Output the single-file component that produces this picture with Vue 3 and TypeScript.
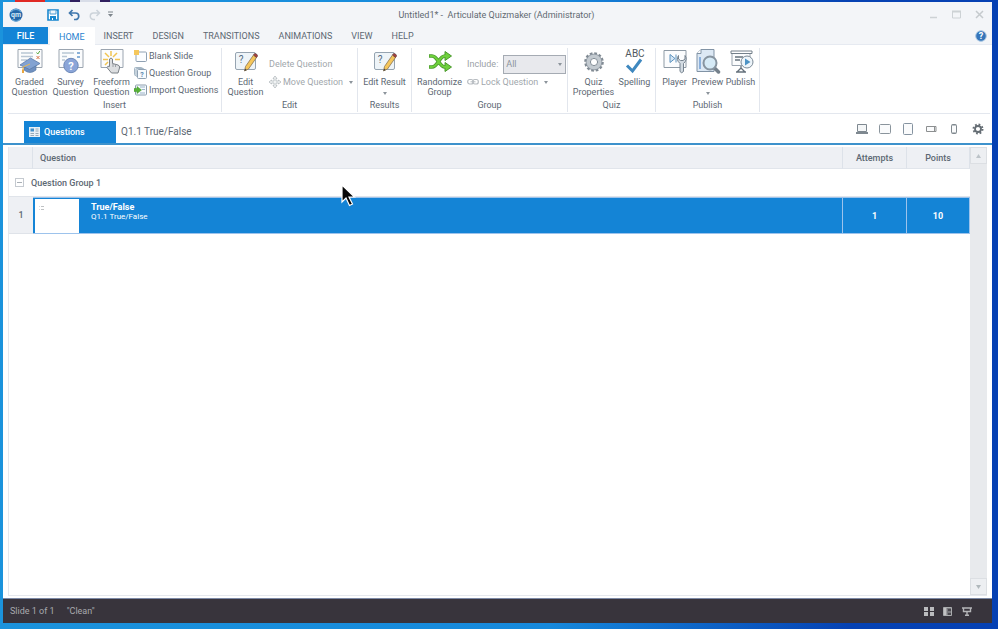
<script setup lang="ts">
import { ref } from 'vue'

const ribbonTabs = ['HOME', 'INSERT', 'DESIGN', 'TRANSITIONS', 'ANIMATIONS', 'VIEW', 'HELP']
const activeTab = ref('HOME')
const include = ref('All')

interface QuizRow {
  index: number
  title: string
  subtitle: string
  attempts: number
  points: number
}
const rows: QuizRow[] = [
  { index: 1, title: 'True/False', subtitle: 'Q1.1 True/False', attempts: 1, points: 10 },
]
</script>

<template>
  <div class="desktop">
    <div class="window">
      <header class="titlebar">
        <div class="quick">
          <svg class="logo" width="14" height="14" viewBox="0 0 14 14">
            <circle cx="7" cy="7" r="6.500" fill="#2467a9" />
            <path d="M2 4a6 6 0 0 1 10 0M3 11.500a6 6 0 0 0 8 0" fill="none" stroke="#69a9d8" stroke-width="1.200" />
            <text x="7" y="9.300" text-anchor="middle" font-size="7" font-weight="700" fill="#d8ebf9">qm</text>
          </svg>
          <button aria-label="Save">
            <svg width="12" height="12" viewBox="0 0 12 12">
              <path d="M1 1h10v10H1z" fill="#fff" stroke="#1787cf" stroke-width="1.600" />
              <path d="M3 1h6v4H3z" fill="#eef5fa" stroke="#4c9bd0" />
              <path d="M3 7h6v4H3z" fill="#1787cf" /><path d="M5 9h1v2H5z" fill="#fff" />
            </svg>
          </button>
          <button aria-label="Undo">
            <svg width="12" height="12" viewBox="0 0 12 12"><path d="M4.500 1L1.500 4l3 3M2 4h5.500a3 3 0 0 1 0 6.500H6" fill="none" stroke="#3f77ad" stroke-width="1.700" /></svg>
          </button>
          <button aria-label="Redo" disabled>
            <svg width="12" height="12" viewBox="0 0 12 12"><path d="M7.500 1l3 3-3 3M10 4H4.500a3 3 0 0 0 0 6.500H6" fill="none" stroke="#ccd3da" stroke-width="1.500" /></svg>
          </button>
          <button class="customize" aria-label="Customize toolbar">
            <svg width="7" height="7" viewBox="0 0 7 7"><path d="M1 1h5" stroke="#7d858c" /><path d="M1 3h5L3.500 6z" fill="#7d858c" /></svg>
          </button>
        </div>
        <div class="title">Untitled1* -&nbsp; Articulate Quizmaker (Administrator)</div>
        <div class="controls">
          <button aria-label="Minimize"><svg width="9" height="9" viewBox="0 0 9 9"><path d="M1 7.500h7" stroke="#cdd2d5" stroke-width="1.500" /></svg></button>
          <button aria-label="Maximize"><svg width="9" height="9" viewBox="0 0 9 9"><path d="M.5 1.500h8v6.500h-8z" fill="none" stroke="#cdd2d5" /><path d="M0 1.500h9" stroke="#cdd2d5" stroke-width="2" /></svg></button>
          <button aria-label="Close"><svg width="9" height="9" viewBox="0 0 9 9"><path d="M1 1l7 7M8 1L1 8" stroke="#c5cacd" stroke-width="1.500" /></svg></button>
        </div>
      </header>

      <nav class="menu">
        <button class="file">FILE</button>
        <button
          v-for="t in ribbonTabs"
          :key="t"
          :class="['tab', { active: t === activeTab }]"
          @click="activeTab = t"
        >{{ t }}</button>
        <button class="help" aria-label="Help">
          <svg width="12" height="12" viewBox="0 0 12 12">
            <circle cx="6" cy="6" r="5.300" fill="#3576bb" stroke="#a9c6e2" />
            <text x="6" y="9" text-anchor="middle" font-size="9" font-weight="700" fill="#fff">?</text>
          </svg>
        </button>
      </nav>

      <section class="ribbon">
        <div class="group insert">
          <div class="tools">
            <button class="big">
              <svg width="26" height="26" viewBox="0 0 26 26">
                <path d="M1 1.500h24v18H1z" fill="#fbfcfd" stroke="#9ba5b0" />
                <path d="M4 5h12M4 8.500h12M4 12h6" stroke="#b8c6d4" stroke-width="1.500" />
                <path d="M19.500 4.500l1.300 1.500 2-3" fill="none" stroke="#58a942" /><path d="M19.500 8l3 3M22.500 8l-3 3" stroke="#d8744a" />
                <path d="M7 16.500v5.500q6 5 12 0v-5.500z" fill="#6f90c0" stroke="#5b7ca6" stroke-width=".7" />
                <path d="M3 17L13.500 10 23 15.500 12.500 21.500z" fill="#82a2d2" stroke="#5b7aa8" stroke-width=".8" />
                <path d="M13 16l-7 3v4" fill="none" stroke="#e8b854" /><path d="M5 21.500h2V25H5z" fill="#e8a742" />
              </svg>
              <span>Graded<br>Question</span>
            </button>
            <button class="big">
              <svg width="26" height="26" viewBox="0 0 26 26">
                <path d="M1 1.500h24v18H1z" fill="#fbfcfd" stroke="#9ba5b0" />
                <path d="M4 5h12M4 8.500h5M4 12h3" stroke="#b8c6d4" stroke-width="1.500" /><path d="M19 5h3M19 9h3" stroke="#8ab1d8" stroke-width="2" />
                <circle cx="13" cy="17.500" r="7.200" fill="#8ba5d8" stroke="#6b88b8" />
                <text x="13" y="21.500" text-anchor="middle" font-size="11" font-weight="700" fill="#fff">?</text>
              </svg>
              <span>Survey<br>Question</span>
            </button>
            <button class="big">
              <svg width="26" height="26" viewBox="0 0 26 26">
                <path d="M2 1.500h22v18H2z" fill="#fbfcfd" stroke="#9ba5b0" />
                <path d="M12 3v5M6 5l4 4M18 5l-4 4M4 11.500h5M16 11.500h5M6 17l3-3" stroke="#f1c452" stroke-width="1.500" />
                <path d="M10.500 11q1.500-2 3 0v4.500l5.500 1.500q2 .5 1.500 3l-1.500 5H12.500l-4.500-5.500q.5-2 2.500-1z" fill="#dcdee0" stroke="#7b8187" />
                <path d="M14 16v3M16.500 17v2" stroke="#8a9096" stroke-width=".8" />
              </svg>
              <span>Freeform<br>Question</span>
            </button>
            <div class="small-col three">
              <button class="small">
                <svg width="13" height="12" viewBox="0 0 13 12"><rect x="2" y="2" width="10.500" height="9.500" rx="1" fill="#fbfdff" stroke="#8fa1b3" /><path d="M0 0h5v5H0z" fill="#f5c75c" /></svg>
                <span>Blank Slide</span>
              </button>
              <button class="small">
                <svg width="13" height="12" viewBox="0 0 13 12">
                  <rect x=".5" y=".5" width="8" height="8" rx="1" fill="#e4edf3" stroke="#a5b6c4" /><rect x="2" y="1.500" width="8" height="8" rx="1" fill="#e4edf3" stroke="#a5b6c4" />
                  <rect x="3.500" y="2.500" width="9" height="9" rx="1" fill="#f7fbfe" stroke="#8fa1b3" /><text x="8" y="10" text-anchor="middle" font-size="7" font-weight="700" fill="#5685ad">?</text>
                </svg>
                <span>Question Group</span>
              </button>
              <button class="small">
                <svg width="13" height="12" viewBox="0 0 13 12"><rect x="1.500" y="1" width="11" height="10" rx="1" fill="#f7fbfe" stroke="#8c9dad" /><path d="M6 3h5M8 5.500h3M6 9h5" stroke="#9ab3c8" /><path d="M0 4.500h3V2.500L7.500 6 3 9.500V7.500H0z" fill="#56b236" stroke="#42952a" stroke-width=".5" /></svg>
                <span>Import Questions</span>
              </button>
            </div>
          </div>
          <div class="label">Insert</div>
        </div>

        <div class="group edit">
          <div class="tools">
            <button class="big wide">
              <svg width="26" height="26" viewBox="0 0 26 26">
                <rect x="2.500" y="4.500" width="20" height="17" rx="1.500" fill="#eef4f8" stroke="#96a4b1" />
                <text x="8" y="14.500" text-anchor="middle" font-size="10" fill="#546c82">?</text>
                <path d="M11.500 23l1-4.500L20.500 7l3 2.500L15.500 21z" fill="#f5c65b" stroke="#8a7350" stroke-width=".8" />
                <path d="M20.500 7l1.200-1.600q2.800.4 3 2.600L23.500 9.500z" fill="#a83f3c" stroke="#5b3b3b" stroke-width=".6" /><path d="M11.500 23l.6-2.600 1.700 1.500z" fill="#444" />
              </svg>
              <span>Edit<br>Question</span>
            </button>
            <div class="small-col two">
              <button class="small" disabled><span>Delete Question</span></button>
              <button class="small" disabled>
                <svg width="12" height="12" viewBox="0 0 12 12"><path d="M6 0l2 2.500H7V5h2.500V4L12 6 9.500 8V7H7v2.500h1L6 12 4 9.500h1V7H2.500v1L0 6l2.500-2v1H5V2.500H4z" fill="#f1f3f4" stroke="#b5bbbf" stroke-width=".8" /></svg>
                <span>Move Question</span><i class="caret"></i>
              </button>
            </div>
          </div>
          <div class="label">Edit</div>
        </div>

        <div class="group results">
          <div class="tools">
            <button class="big wide">
              <svg width="26" height="26" viewBox="0 0 26 26">
                <rect x="2.500" y="4.500" width="20" height="17" rx="1.500" fill="#eef4f8" stroke="#96a4b1" />
                <text x="8" y="14.500" text-anchor="middle" font-size="10" fill="#546c82">?</text>
                <path d="M11.500 23l1-4.500L20.500 7l3 2.500L15.500 21z" fill="#f5c65b" stroke="#8a7350" stroke-width=".8" />
                <path d="M20.500 7l1.200-1.600q2.800.4 3 2.600L23.500 9.500z" fill="#a83f3c" stroke="#5b3b3b" stroke-width=".6" /><path d="M11.500 23l.6-2.600 1.700 1.500z" fill="#444" />
              </svg>
              <span>Edit Result</span><i class="caret"></i>
            </button>
          </div>
          <div class="label">Results</div>
        </div>

        <div class="group randomize">
          <div class="tools">
            <button class="big wide">
              <svg width="26" height="26" viewBox="0 0 26 26">
                <path d="M2 8h3c6 0 7 11 13 11h1M2 19h3c6 0 7-11 13-11h1" fill="none" stroke="#4a9a2c" stroke-width="3.600" />
                <path d="M18 3.500L24.500 8 18 12.500zM18 14.500l6.500 4.500-6.500 4.500z" fill="#6fd03c" stroke="#4a9a2c" />
                <path d="M2.600 8H5c6 0 7 11 13 11h2M2.600 19H5c6 0 7-11 13-11h2" fill="none" stroke="#6fd03c" stroke-width="2" />
              </svg>
              <span>Randomize<br>Group</span>
            </button>
            <div class="small-col two">
              <div class="include">
                <label for="include">Include:</label>
                <div class="select-box">
                  <select id="include" v-model="include" disabled><option>All</option></select>
                  <i class="caret"></i>
                </div>
              </div>
              <button class="small" disabled>
                <svg width="12" height="12" viewBox="0 0 12 12"><rect x=".7" y="3.500" width="5.500" height="4.500" rx="2" fill="none" stroke="#b7bcc1" stroke-width="1.200" /><rect x="5.800" y="3.500" width="5.500" height="4.500" rx="2" fill="none" stroke="#b7bcc1" stroke-width="1.200" /><path d="M3.500 5.800h5" stroke="#b7bcc1" /></svg>
                <span>Lock Question</span><i class="caret"></i>
              </button>
            </div>
          </div>
          <div class="label">Group</div>
        </div>

        <div class="group quiz">
          <div class="tools">
            <button class="big">
              <svg width="26" height="26" viewBox="0 0 26 26">
                <circle cx="13" cy="14" r="8.500" fill="none" stroke="#808a93" stroke-width="2.600" stroke-dasharray="2.670 1.780" />
                <circle cx="13" cy="14" r="5.800" fill="none" stroke="#c3cad0" stroke-width="4.200" /><circle cx="13" cy="14" r="7.900" fill="none" stroke="#87919a" stroke-width=".8" />
                <circle cx="13" cy="14" r="3.600" fill="#fff" stroke="#808b95" />
              </svg>
              <span>Quiz<br>Properties</span>
            </button>
            <button class="big">
              <svg width="26" height="26" viewBox="0 0 26 26">
                <text x="13" y="9" text-anchor="middle" font-size="10" fill="#4f5961">ABC</text>
                <path d="M5 17.500l5.500 5.500 8.500-11.500" fill="none" stroke="#3f88bf" stroke-width="3" />
              </svg>
              <span>Spelling</span>
            </button>
          </div>
          <div class="label">Quiz</div>
        </div>

        <div class="group publish">
          <div class="tools">
            <button class="big">
              <svg width="26" height="26" viewBox="0 0 26 26">
                <path d="M2 2.500h22v17H2z" fill="#fbfcfd" stroke="#8e9aa5" />
                <path d="M8 6.500v8l5-4zM14 6.500v8" fill="#d4e6f5" stroke="#5d93bf" />
                <path d="M16.500 7.500q-3 4 1.500 8v8q1.500 2.500 3.500 0v-8q4.500-4 1.500-8v3.500l-2 1.500h-2.500l-2-1.500z" fill="#d3dbe2" stroke="#76838f" />
              </svg>
              <span>Player</span>
            </button>
            <button class="big">
              <svg width="26" height="26" viewBox="0 0 26 26">
                <path d="M6 1.500h13v22H2V5.500z" fill="#dce8f4" stroke="#8193a5" /><path d="M6 1.500v4H2" fill="#fff" stroke="#8193a5" /><path d="M5 9v12" stroke="#8bb0dc" stroke-width="2" />
                <path d="M19.500 20l4 4" stroke="#75818c" stroke-width="3.500" stroke-linecap="round" /><circle cx="15" cy="15" r="6.500" fill="#d6eaf6" stroke="#8794a0" stroke-width="2" />
              </svg>
              <span>Preview</span><i class="caret"></i>
            </button>
            <button class="big">
              <svg width="26" height="26" viewBox="0 0 26 26">
                <path d="M4 5.500h18v12H4z" fill="#fbfcfd" stroke="#9ba5b0" /><path d="M3 3h21v2.500H3z" fill="#fff" stroke="#74808b" />
                <path d="M7 9h8M7 12h5M13 18v3M13 20l-4 4M13 20l4 4M8 24h10" fill="none" stroke="#65717c" stroke-width="1.300" />
                <circle cx="19" cy="14" r="6" fill="#eef5fa" stroke="#7c8a97" /><path d="M17 10.500v7l5.500-3.500z" fill="#4d93c5" />
              </svg>
              <span>Publish</span>
            </button>
          </div>
          <div class="label">Publish</div>
        </div>
      </section>

      <div class="docbar">
        <button class="doc active">
          <svg width="11" height="10" viewBox="0 0 11 10"><path d="M0 0h11v10H0z" fill="#e8f0f6" /><path d="M1.500 1.500H5v3H1.500z" fill="#3f8fcb" /><path d="M6.500 2h3M6.500 4h3M1.500 6.500H5M1.500 8.500H5M6.500 6.500h3M6.500 8.500h3" stroke="#8198aa" stroke-width=".8" /></svg>
          <span>Questions</span>
        </button>
        <button class="doc">Q1.1 True/False</button>
        <div class="devices">
          <button aria-label="Desktop"><svg width="14" height="14" viewBox="0 0 14 14"><path d="M2.500 2.500h9v7h-9z" fill="#f4f6f7" stroke="#7e8890" /><path d="M1 11h12" stroke="#7e8890" stroke-width="2" /></svg></button>
          <button aria-label="Tablet landscape"><svg width="14" height="14" viewBox="0 0 14 14"><rect x="1.500" y="2.500" width="11" height="9" rx="1" fill="#fafbfc" stroke="#8a949c" /></svg></button>
          <button aria-label="Tablet portrait"><svg width="14" height="14" viewBox="0 0 14 14"><rect x="2.500" y="1.500" width="9" height="11" rx="1" fill="#fafbfc" stroke="#8593a0" /></svg></button>
          <button aria-label="Phone landscape"><svg width="14" height="14" viewBox="0 0 14 14"><path d="M2.500 4.500h9.500v5H2.500zM10.500 4.500v5" fill="#fafbfc" stroke="#8c8f90" /></svg></button>
          <button aria-label="Phone portrait"><svg width="14" height="14" viewBox="0 0 14 14"><rect x="4.500" y="2.500" width="5" height="9" rx="1" fill="#fafbfc" stroke="#80898f" /><path d="M5 3h4M5 11h4" stroke="#80898f" /></svg></button>
          <button aria-label="Settings"><svg width="14" height="14" viewBox="0 0 14 14"><circle cx="8" cy="7" r="3" fill="none" stroke="#656d74" stroke-width="1.800" /><circle cx="8" cy="7" r="4.500" fill="none" stroke="#656d74" stroke-width="2" stroke-dasharray="1.730 1.804" /></svg></button>
        </div>
      </div>

      <main class="workspace">
        <div class="list">
          <table>
            <colgroup><col class="c-num"><col><col class="c-att"><col class="c-pts"></colgroup>
            <thead>
              <tr><th></th><th class="left">Question</th><th>Attempts</th><th>Points</th></tr>
            </thead>
            <tbody>
              <tr class="group-row">
                <td colspan="4">
                  <div class="group-head">
                    <button class="toggle" aria-label="Collapse group"></button>
                    <span>Question Group 1</span>
                  </div>
                </td>
              </tr>
              <tr v-for="r in rows" :key="r.index" class="question">
                <td class="num">{{ r.index }}</td>
                <td class="cell">
                  <div class="entry">
                    <div class="thumb"><svg width="8" height="8" viewBox="0 0 8 8"><path d="M3 2.500h3M3 5.500h3" stroke="#bfc2c4" /><path d="M1 2.500h1M1 5.500h1" stroke="#d8dadb" /></svg></div>
                    <div class="text"><b>{{ r.title }}</b><span>{{ r.subtitle }}</span></div>
                  </div>
                </td>
                <td class="cell value">{{ r.attempts }}</td>
                <td class="cell value">{{ r.points }}</td>
              </tr>
            </tbody>
          </table>
        </div>
        <div class="scroll">
          <button aria-label="Scroll up"><svg width="7" height="6" viewBox="0 0 7 6"><path d="M3.500 1L6 5H1z" fill="#bcc3c8" /></svg></button>
          <button aria-label="Scroll down"><svg width="7" height="6" viewBox="0 0 7 6"><path d="M3.500 5L6 1H1z" fill="#b0b8bc" /></svg></button>
        </div>
      </main>

      <footer class="status">
        <span>Slide 1 of 1</span>
        <span>"Clean"</span>
        <div class="views">
          <button aria-label="Grid view"><svg width="10" height="9" viewBox="0 0 10 9"><path d="M0 0h4v4H0zM6 0h4v4H6zM0 5h4v4H0zM6 5h4v4H6z" fill="#bbbcbf" /></svg></button>
          <button aria-label="Normal view"><svg width="10" height="9" viewBox="0 0 10 9"><path d="M.5 .5h8v8h-8z" fill="#77777c" stroke="#aaacae" /><path d="M1 1h2.500v7H1z" fill="#c2c2c4" /><path d="M5 2h3v2H5zM5 6h3v2H5z" fill="#49474e" /></svg></button>
          <button aria-label="Slide show"><svg width="10" height="9" viewBox="0 0 10 9"><path d="M0 1h10M1.500 1v3.500h7V1M2 4.500h6M5 5v3M3 8.300h4" fill="none" stroke="#b4b5b8" stroke-width="1.400" /></svg></button>
        </div>
      </footer>
    </div>

    <svg class="pointer" width="16" height="24" viewBox="0 0 16 24"><path d="M2 2v17l4-4 3.500 7.500 3-1.500L9 14h5.500z" fill="#080808" stroke="#fff" stroke-width="1.200" /></svg>
  </div>
</template>

<style>
body { margin: 0; }
</style>

<style scoped>
.desktop {
  position: relative;
  display: flex;
  box-sizing: border-box;
  min-height: 100vh;
  padding: 2px 6px 6px 3px;
  background:
    linear-gradient(#e02a25, #e02a25) 15px 0 / 30px 2px no-repeat,
    linear-gradient(90deg, #30205f 0 10px, #d8dde8 10px 30px, #30205f 30px) 70px 0 / 40px 2px no-repeat,
    linear-gradient(90deg, #1b93dc 0%, #1689dc 55%, #0642b3 85%, #0641b3 100%);
  font-family: Roboto, "Open Sans", sans-serif;
  font-size: 9px;
  line-height: 10px;
  color: #5d6873;
}
button {
  padding: 0;
  border: 0;
  background: none;
  color: inherit;
  font: inherit;
  white-space: nowrap;
}
svg { display: block; flex: none; }
.window {
  display: flex;
  flex: 1;
  flex-direction: column;
  min-width: 0;
  background: #fff;
}
.titlebar {
  display: grid;
  grid-template-columns: 1fr auto 1fr;
  align-items: center;
  height: 25px;
  padding: 0 8px 0 6px;
  background: #f3f5f8;
}
.quick { display: flex; align-items: center; gap: 9px; }
.logo { margin-right: 15px; }
.customize { margin-left: -3px; }
.title { color: #626a72; white-space: nowrap; }
.controls { display: flex; justify-content: flex-end; gap: 14px; }
.menu {
  display: flex;
  align-items: stretch;
  height: 17px;
  border-bottom: 1px solid #e6eaf1;
  background: #f3f5f8;
}
.file { width: 45px; margin-right: 2px; background: #1484d6; color: #fff; font-weight: 500; }
.tab { padding: 1px 10px 0 9px; }
.tab.active { margin-bottom: -1px; background: #fff; color: #2a83cf; }
.help { display: flex; align-items: center; margin-left: auto; margin-right: 5px; }
.ribbon {
  display: flex;
  height: 68px;
  margin: 0 2px 0 5px;
  border-bottom: 1px solid #e3e7ee;
}
.group {
  display: flex;
  flex: none;
  flex-direction: column;
  margin: 3px 0 1px;
  border-right: 1px solid #e2e6ed;
}
.tools { display: flex; height: 51px; }
.label { text-align: center; line-height: 12px; }
.insert { width: 213px; }
.insert .tools { padding-left: 1px; }
.edit { width: 135px; }
.results { width: 53px; }
.randomize { width: 155px; }
.quiz { width: 87px; }
.publish { width: 103px; }
.big {
  display: flex;
  flex: none;
  flex-direction: column;
  align-items: center;
  width: 41px;
  line-height: 10px;
}
.big svg { margin-bottom: 3px; }
.edit .wide { width: 47px; }
.results .wide { width: 53px; }
.randomize .wide { width: 55px; }
.quiz .tools { padding-left: 5px; }
.publish .tools { padding-left: 2px; }
.publish .big { width: 33px; }
.caret {
  width: 0;
  height: 0;
  border: 2px solid transparent;
  border-top: 3px solid #8c949b;
  border-bottom: 0;
}
.big .caret { margin-top: 5px; }
.small-col { display: flex; flex-direction: column; align-items: flex-start; }
.three { gap: 5px; padding: 2px 0 0 2px; }
.two { gap: 6px; padding-top: 10px; }
.small { display: flex; align-items: center; gap: 2px; height: 12px; }
.small .caret { margin-left: 4px; }
.small:disabled { color: #a1a7ac; }
.include { display: flex; align-items: center; gap: 5px; height: 12px; color: #9aa1a7; }
.select-box {
  display: flex;
  align-items: center;
  box-sizing: border-box;
  width: 63px;
  height: 19px;
  padding-right: 3px;
  border: 1px solid #a5abb3;
  background: #e8e9ed;
}
select {
  flex: 1;
  min-width: 0;
  padding: 0 0 0 2px;
  border: 0;
  appearance: none;
  background: none;
  color: #8c949b;
  font: inherit;
  opacity: 1;
}
.docbar {
  display: flex;
  align-items: flex-end;
  height: 29px;
  padding: 0 8px 0 21px;
  border-bottom: 2px solid #3d92cc;
}
.doc { display: flex; align-items: center; gap: 4px; height: 22px; padding: 0 5px; font-size: 10px; }
.doc.active { width: 92px; background: #1484d6; color: #fff; font-size: 9px; font-weight: 500; }
.devices { display: flex; align-self: center; gap: 9px; margin-left: auto; }
.workspace {
  display: flex;
  flex: 1;
  margin: 2px 5px 2px;
  border: 1px solid #e5e8ee;
  border-width: 0 0 1px 1px;
}
.list { flex: 1; min-width: 0; }
table { width: 100%; border-spacing: 0; table-layout: fixed; }
.c-num { width: 24px; }
.c-att { width: 64px; }
.c-pts { width: 63px; }
th, td { padding: 0; box-sizing: border-box; }
th {
  height: 22px;
  border-right: 1px solid #dde2e9;
  border-bottom: 1px solid #e1e5eb;
  background: #eef0f4;
  font-weight: 500;
}
th.left { padding-left: 7px; text-align: left; }
.group-row td { height: 28px; border-bottom: 1px solid #e0e4ea; }
.group-head { display: flex; align-items: center; gap: 7px; padding-left: 6px; font-weight: 500; }
.toggle {
  display: flex;
  align-items: center;
  justify-content: center;
  box-sizing: border-box;
  width: 9px;
  height: 9px;
  border: 1px solid #c5cad0;
}
.toggle::before { content: ""; width: 5px; height: 1px; background: #aab0b6; }
.question td { height: 37px; }
.num { border-bottom: 1px solid #dfe3e9; background: #eef0f4; font-weight: 500; text-align: center; }
.cell {
  border: 1px solid #9dc3ec;
  border-width: 1px 1px 1px 0;
  background: #1484d6;
  color: #fff;
}
.value { font-weight: 700; text-align: center; }
.entry { display: flex; align-items: center; gap: 12px; padding-left: 2px; }
.thumb { box-sizing: border-box; width: 44px; height: 34px; padding: 5px 3px; background: #fff; }
.text { display: flex; flex-direction: column; align-self: flex-start; padding-top: 3px; }
.text span { font-size: 8px; }
.scroll {
  display: flex;
  flex-direction: column;
  justify-content: space-between;
  width: 17px;
  background: #e8eaed;
}
.scroll button {
  display: flex;
  align-items: center;
  justify-content: center;
  height: 17px;
  border: 1px solid #dcdfe3;
  background: #edeff2;
}
.status {
  display: flex;
  align-items: center;
  gap: 12px;
  height: 24px;
  padding: 0 20px 0 7px;
  border-top: 1px solid #7c89a5;
  background: #38343c;
  color: #a9aaae;
}
.views { display: flex; gap: 9px; margin-left: auto; }
.pointer { position: absolute; left: 340px; top: 183px; }
</style>
